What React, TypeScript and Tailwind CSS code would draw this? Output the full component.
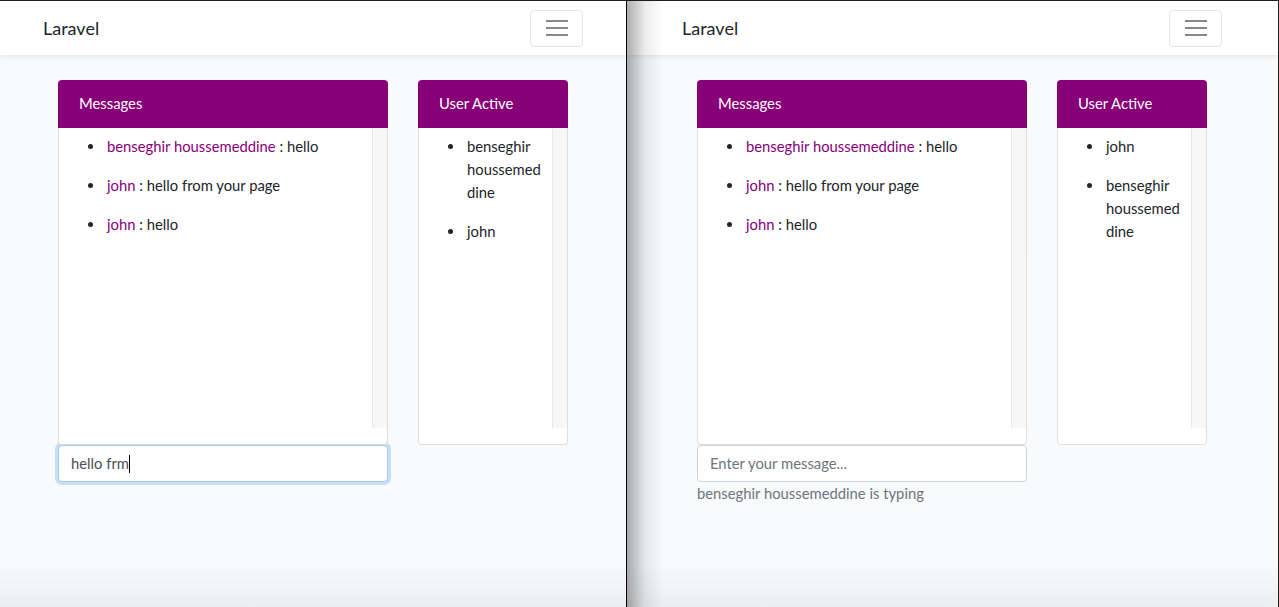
import React from 'react';

const messages = [
  { user: 'benseghir houssemeddine', text: 'hello' },
  { user: 'john', text: 'hello from your page' },
  { user: 'john', text: 'hello' },
];

function Navbar ({ pad }: { pad: string })
{
  return (
    <nav className={`h-[54px] bg-white shadow-[0_2px_4px_rgba(0,0,0,0.075)] relative z-10 ${pad}`}>
      <div className="w-[540px] h-full flex items-center justify-between">
        <span className="text-[18px] text-[#212529]">Laravel</span>
        <button className="w-[53px] h-[37px] border border-[rgba(0,0,0,0.1)] rounded-[4px] flex flex-col items-center justify-center gap-[5px]">
          <span className="block w-[22px] h-[2px] bg-[#888]"></span>
          <span className="block w-[22px] h-[2px] bg-[#888]"></span>
          <span className="block w-[22px] h-[2px] bg-[#888]"></span>
        </button>
      </div>
    </nav>
  );
}

function Card ({ title, width, children }: { title: string; width: string; children: React.ReactNode })
{
  return (
    <div className={`${width} flex flex-col`}>
      <div className="h-[48px] bg-[#870078] rounded-t-[4px] px-[21px] pb-px flex items-center text-white text-[14.8px]">
        {title}
      </div>
      <div className="bg-white border-x border-b border-[rgba(0,0,0,0.125)] rounded-b-[4px] pb-[16px]">
        <div className="h-[300px] flex">
          <div className="flex-1 overflow-hidden">{children}</div>
          <div className="w-[15px] bg-[#f7f7f7] border-l border-[#e8e8e8]"></div>
        </div>
      </div>
    </div>
  );
}

function Item ({ children, nowrap }: { children: React.ReactNode; nowrap?: boolean })
{
  return (
    <li className={`flex mb-[16px] ${nowrap ? 'whitespace-nowrap' : ''}`}>
      <span className="mt-[9px] mr-[14px] w-[5px] h-[5px] shrink-0 rounded-full bg-[#212529]"></span>
      <div>{children}</div>
    </li>
  );
}

function Window ({ pad, focused, users }: { pad: string; focused: boolean; users: string[][] })
{
  return (
    <div className="h-full bg-[#f8fafc]">
      <Navbar pad={pad} />
      <div className={pad}>
        <div className="w-[540px] px-[15px] pt-[25px]">
          <div className="flex gap-[30px]">
            <div className="w-[330px]">
              <Card title="Messages" width="w-[330px]">
                <ul className="pl-[29px] pt-[7px] text-[14.8px] leading-[23px] text-[#212529]">
                  {messages.map((m, i) => (
                    <Item key={i} nowrap>
                      <span className="text-[#870078]">{m.user}</span> : {m.text}
                    </Item>
                  ))}
                </ul>
              </Card>
              {focused ? (
                <div className="h-[37px] bg-white border border-[#a1cbef] rounded-[4px] shadow-[0_0_0_3px_rgba(52,144,220,0.25)] px-[12px] flex items-center text-[14.8px] text-[#495057]">
                  hello frm<span className="inline-block w-px h-[18px] bg-black"></span>
                </div>
              ) : (
                <>
                  <div className="h-[37px] bg-white border border-[#ced4da] rounded-[4px] px-[12px] flex items-center text-[14.8px] text-[#6c757d]">
                    Enter your message...
                  </div>
                  <p className="text-[14.8px] leading-[23px] text-[#6c757d]">benseghir houssemeddine is typing</p>
                </>
              )}
            </div>
            <Card title="User Active" width="w-[150px]">
              <ul className="pl-[29px] pt-[7px] text-[14.8px] leading-[23px] text-[#212529]">
                {users.map((lines, i) => (
                  <Item key={i}>
                    {lines.map((l, j) => (
                      <span key={j} className="block">{l}</span>
                    ))}
                  </Item>
                ))}
              </ul>
            </Card>
          </div>
        </div>
      </div>
    </div>
  );
}

export default function App ()
{
  return (
    <div className="relative w-[1279px] h-[607px] overflow-hidden bg-[#1e1e1e] pt-px font-['Lato','Liberation_Sans',sans-serif]">
      <div className="flex h-full">
        <div className="w-[626px] h-full relative">
          <Window pad="pl-[43px]" focused users={[['benseghir', 'houssemed', 'dine'], ['john']]} />
          <div className="absolute left-0 right-0 bottom-0 h-[45px] bg-gradient-to-b from-transparent to-[rgba(0,0,0,0.05)]"></div>
        </div>
        <div className="w-px bg-black"></div>
        <div className="w-[651px] h-full relative">
          <Window pad="pl-[55px]" focused={false} users={[['john'], ['benseghir', 'houssemed', 'dine']]} />
          <div className="absolute left-0 top-0 bottom-0 w-[36px] bg-gradient-to-r from-[rgba(0,0,0,0.32)] via-[rgba(0,0,0,0.08)] to-transparent z-20"></div>
          <div className="absolute left-0 right-0 bottom-0 h-[45px] bg-gradient-to-b from-transparent to-[rgba(0,0,0,0.05)]"></div>
        </div>
        <div className="w-px bg-[#1e1e1e]"></div>
      </div>
    </div>
  );
}
